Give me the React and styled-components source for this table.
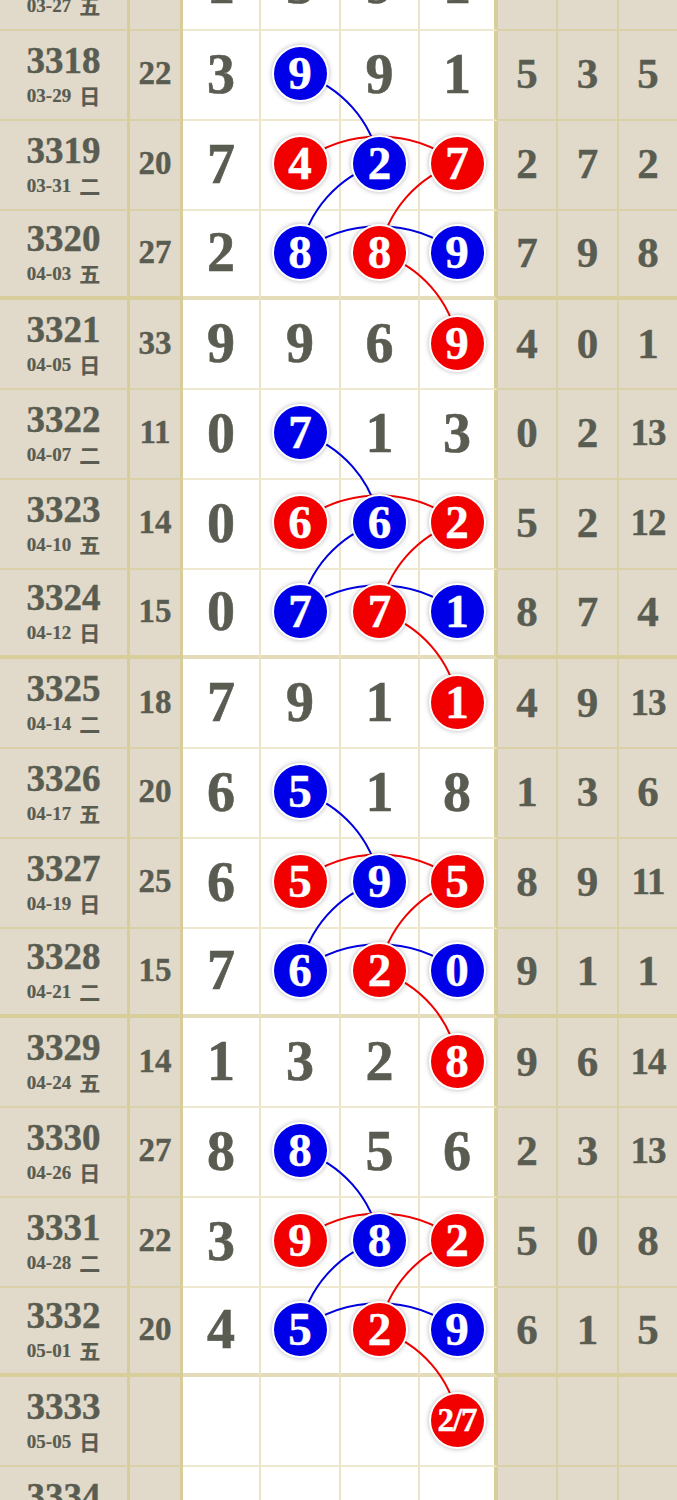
import React from 'react';
import styled, { createGlobalStyle } from 'styled-components';

const ROW_H = 89.75;
const TOP_SHIFT = -58.75;
const BALL_X = [221, 300, 379.5, 458];

const rows = [
  { no: '3317', date: '03-27', wk: '五', sum: '21', nums: ['1', '3', '9', '1'], balls: '....', tail: ['9', '5', '7'] },
  { no: '3318', date: '03-29', wk: '日', sum: '22', nums: ['3', '9', '9', '1'], balls: '.b..', tail: ['5', '3', '5'] },
  { no: '3319', date: '03-31', wk: '二', sum: '20', nums: ['7', '4', '2', '7'], balls: '.rbr', tail: ['2', '7', '2'] },
  { no: '3320', date: '04-03', wk: '五', sum: '27', nums: ['2', '8', '8', '9'], balls: '.brb', tail: ['7', '9', '8'] },
  { no: '3321', date: '04-05', wk: '日', sum: '33', nums: ['9', '9', '6', '9'], balls: '...r', tail: ['4', '0', '1'] },
  { no: '3322', date: '04-07', wk: '二', sum: '11', nums: ['0', '7', '1', '3'], balls: '.b..', tail: ['0', '2', '13'] },
  { no: '3323', date: '04-10', wk: '五', sum: '14', nums: ['0', '6', '6', '2'], balls: '.rbr', tail: ['5', '2', '12'] },
  { no: '3324', date: '04-12', wk: '日', sum: '15', nums: ['0', '7', '7', '1'], balls: '.brb', tail: ['8', '7', '4'] },
  { no: '3325', date: '04-14', wk: '二', sum: '18', nums: ['7', '9', '1', '1'], balls: '...r', tail: ['4', '9', '13'] },
  { no: '3326', date: '04-17', wk: '五', sum: '20', nums: ['6', '5', '1', '8'], balls: '.b..', tail: ['1', '3', '6'] },
  { no: '3327', date: '04-19', wk: '日', sum: '25', nums: ['6', '5', '9', '5'], balls: '.rbr', tail: ['8', '9', '11'] },
  { no: '3328', date: '04-21', wk: '二', sum: '15', nums: ['7', '6', '2', '0'], balls: '.brb', tail: ['9', '1', '1'] },
  { no: '3329', date: '04-24', wk: '五', sum: '14', nums: ['1', '3', '2', '8'], balls: '...r', tail: ['9', '6', '14'] },
  { no: '3330', date: '04-26', wk: '日', sum: '27', nums: ['8', '8', '5', '6'], balls: '.b..', tail: ['2', '3', '13'] },
  { no: '3331', date: '04-28', wk: '二', sum: '22', nums: ['3', '9', '8', '2'], balls: '.rbr', tail: ['5', '0', '8'] },
  { no: '3332', date: '05-01', wk: '五', sum: '20', nums: ['4', '5', '2', '9'], balls: '.brb', tail: ['6', '1', '5'] },
  { no: '3333', date: '05-05', wk: '日', sum: '', nums: ['', '', '', '2/7'], balls: '...r', tail: ['', '', ''] },
  { no: '3334', date: '05-07', wk: '二', sum: '', nums: ['', '', '', ''], balls: '....', tail: ['', '', ''] },
];

const GlobalStyle = createGlobalStyle`
  html, body {
    margin: 0;
    padding: 0;
    background: #fff;
    overflow: hidden;
  }
  body {
    font-family: "Liberation Serif", "Noto Sans CJK SC", serif;
    color: #595c51;
  }
`;

const Sheet = styled.div`
  position: relative;
  width: 677px;
  margin-top: ${TOP_SHIFT}px;
`;

const Row = styled.div`
  display: grid;
  grid-template-columns: 130px 53px 78px 80px 79px 78px 60px 61px 58px;
  height: ${ROW_H}px;
`;

const Cell = styled.div`
  box-sizing: border-box;
  display: flex;
  align-items: center;
  justify-content: center;
  padding-bottom: 2px;
  font-weight: bold;
  line-height: 1;
  -webkit-text-stroke: 0.4px currentColor;
  background: #e1d9c9;
  border-bottom: ${p => (p.$thick ? 4 : 2)}px solid ${p => (p.$thick ? '#d7ce9c' : '#dad1a8')};
  border-right: 2px solid #d9d0a7;
`;

const IssueCell = styled(Cell)`
  flex-direction: column;
  border-right: 3px solid #d6cd98;
`;

const IssueNo = styled.div`
  font-size: 37px;
`;

const DateLine = styled.div`
  margin-top: 6px;
  font-size: 19px;
  display: flex;
  align-items: center;
  -webkit-text-stroke: 0.2px currentColor;
`;

const Week = styled.span`
  margin-left: 8px;
  font-family: "Noto Sans CJK SC", sans-serif;
  font-size: 21px;
  font-weight: bold;
`;

const SumCell = styled(Cell)`
  font-size: 33px;
  border-right: 3px solid #d6cd98;
`;

const NumCell = styled(Cell)`
  background: #fff;
  font-size: 56px;
  -webkit-text-stroke: 0.6px currentColor;
  border-bottom-color: ${p => (p.$thick ? '#e4dcb8' : '#eee8cf')};
  border-right: ${p => (p.$edge ? '4px solid #d7ce9a' : '2px solid #ebe4c7')};
`;

const TailCell = styled(Cell)`
  font-size: ${p => (p.$wide ? 37 : 43)}px;
  letter-spacing: ${p => (p.$wide ? -1 : 0)}px;
  border-right: ${p => (p.$last ? 'none' : '2px solid #d9d0a7')};
`;

const Ball = styled.span`
  position: relative;
  z-index: 2;
  box-sizing: border-box;
  width: 57px;
  height: 57px;
  border-radius: 50%;
  border: 2.5px solid #fff;
  background: ${p => (p.$color === 'b' ? '#0000e8' : '#f20000')};
  box-shadow: 0 0 5px rgba(0, 0, 0, 0.3);
  display: flex;
  align-items: center;
  justify-content: center;
  color: #fff;
  -webkit-text-stroke: 0.5px #fff;
  font-size: ${p => (p.$small ? 33 : 47)}px;
  letter-spacing: ${p => (p.$small ? -1 : 0)}px;
  line-height: 1;
`;

const Links = styled.svg`
  position: absolute;
  left: 0;
  top: 0;
  z-index: 1;
  pointer-events: none;
`;

const cy = i => i * ROW_H + 43;

// every group of four rows repeats the same blue / red chain
function groupPaths(g) {
  const a = 1 + 4 * g;
  const [yA, yB, yC, yD] = [cy(a), cy(a + 1), cy(a + 2), cy(a + 3)];
  const [, x1, x2, x3] = BALL_X;
  return {
    blue: [
      `M${x1} ${yA} A115 115 0 0 1 ${x2} ${yB}`,
      `M${x2} ${yB} A115 115 0 0 0 ${x1} ${yC}`,
      `M${x1} ${yC} A129 129 0 0 1 ${x3} ${yC}`,
    ],
    red: [
      `M${x1} ${yB} A129 129 0 0 1 ${x3} ${yB}`,
      `M${x3} ${yB} A115 115 0 0 0 ${x2} ${yC}`,
      `M${x2} ${yC} A115 115 0 0 1 ${x3} ${yD}`,
    ],
  };
}

const App = () => {
  const groups = [0, 1, 2, 3].map(groupPaths);
  const height = rows.length * ROW_H;

  return (
    <>
      <GlobalStyle />
      <Sheet>
        {rows.map(r => {
          const thick = (parseInt(r.no, 10) - 3316) % 4 === 0;
          return (
            <Row key={r.no}>
              <IssueCell $thick={thick}>
                <IssueNo>{r.no}</IssueNo>
                <DateLine>
                  {r.date}
                  <Week>{r.wk}</Week>
                </DateLine>
              </IssueCell>
              <SumCell $thick={thick}>{r.sum}</SumCell>
              {r.nums.map((n, i) => (
                <NumCell key={i} $thick={thick} $edge={i === 3}>
                  {r.balls[i] !== '.' ? (
                    <Ball $color={r.balls[i]} $small={n.length > 1}>{n}</Ball>
                  ) : (
                    n
                  )}
                </NumCell>
              ))}
              {r.tail.map((t, i) => (
                <TailCell key={i} $thick={thick} $wide={t.length > 1} $last={i === 2}>
                  {t}
                </TailCell>
              ))}
            </Row>
          );
        })}
        <Links width="677" height={height} viewBox={`0 0 677 ${height}`}>
          {groups.map((p, g) => (
            <g key={g} fill="none" strokeWidth="2">
              {p.blue.map((d, i) => <path key={'b' + i} d={d} stroke="#0000e0" />)}
              {p.red.map((d, i) => <path key={'r' + i} d={d} stroke="#f00000" />)}
            </g>
          ))}
        </Links>
      </Sheet>
    </>
  );
};

export default App;
